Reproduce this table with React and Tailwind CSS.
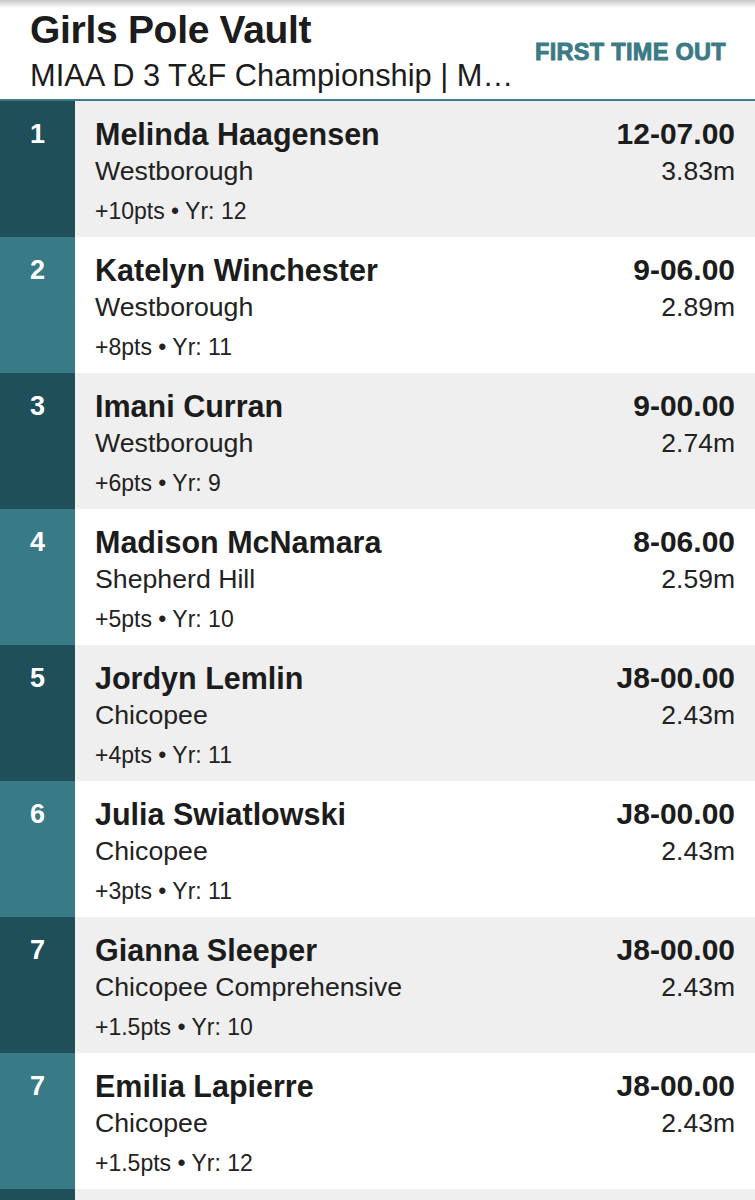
import React from "react";

const rows = [
  { rank: "1", name: "Melinda Haagensen", school: "Westborough", pts: "+10pts", yr: "12", mark: "12-07.00", metric: "3.83m" },
  { rank: "2", name: "Katelyn Winchester", school: "Westborough", pts: "+8pts", yr: "11", mark: "9-06.00", metric: "2.89m" },
  { rank: "3", name: "Imani Curran", school: "Westborough", pts: "+6pts", yr: "9", mark: "9-00.00", metric: "2.74m" },
  { rank: "4", name: "Madison McNamara", school: "Shepherd Hill", pts: "+5pts", yr: "10", mark: "8-06.00", metric: "2.59m" },
  { rank: "5", name: "Jordyn Lemlin", school: "Chicopee", pts: "+4pts", yr: "11", mark: "J8-00.00", metric: "2.43m" },
  { rank: "6", name: "Julia Swiatlowski", school: "Chicopee", pts: "+3pts", yr: "11", mark: "J8-00.00", metric: "2.43m" },
  { rank: "7", name: "Gianna Sleeper", school: "Chicopee Comprehensive", pts: "+1.5pts", yr: "10", mark: "J8-00.00", metric: "2.43m" },
  { rank: "7", name: "Emilia Lapierre", school: "Chicopee", pts: "+1.5pts", yr: "12", mark: "J8-00.00", metric: "2.43m" },
];

export default function App() {
  return (
    <div
      className="w-[755px] h-[1200px] overflow-hidden bg-white text-[#222]"
      style={{ fontFamily: '"Liberation Sans", Arial, sans-serif' }}
    >
      <div className="h-[8px] bg-gradient-to-b from-[#c8c8c8] to-white" />
      <div className="flex items-center justify-between pl-[30px] pr-[29px] pb-[5px]">
        <div className="min-w-0">
          <div className="text-[39px] leading-[44px] font-bold text-[#1c1c1c] tracking-[-0.3px]">Girls Pole Vault</div>
          <div className="mt-[6px] text-[30.8px] leading-[36px] text-[#1c1c1c] whitespace-nowrap">
            MIAA D 3 T&amp;F Championship | M…
          </div>
        </div>
        <div className="text-[23.5px] leading-[28px] font-bold text-[#3c7a85] tracking-[0.3px] [-webkit-text-stroke:0.9px_#3c7a85] mt-[2px]">
          FIRST TIME OUT
        </div>
      </div>
      <div className="h-[2px] bg-[#3b7e88]" />
      <div>
        {rows.map((r, i) => {
          const odd = i % 2 === 0;
          return (
            <div key={i} className={`flex h-[136px] ${odd ? "bg-[#efefef]" : "bg-white"}`}>
              <div
                className={`w-[75px] shrink-0 flex justify-center pt-[15px] ${odd ? "bg-[#1f4f59]" : "bg-[#387b86]"}`}
              >
                <span className="text-[27px] leading-[36px] font-bold text-white">{r.rank}</span>
              </div>
              <div className="flex-1 flex justify-between pl-[20px] pr-[20px] pt-[15px]">
                <div>
                  <div className="text-[30.5px] leading-[36px] font-bold text-[#1c1c1c]">{r.name}</div>
                  <div className="text-[26.7px] leading-[38px] text-[#222]">{r.school}</div>
                  <div className="text-[23px] leading-[42px] text-[#222]">
                    {r.pts} • Yr: {r.yr}
                  </div>
                </div>
                <div className="text-right">
                  <div className="text-[30px] leading-[36px] font-bold text-[#1c1c1c]">{r.mark}</div>
                  <div className="text-[26.5px] leading-[38px] text-[#222]">{r.metric}</div>
                </div>
              </div>
            </div>
          );
        })}
        <div className="flex h-[136px] bg-[#efefef]">
          <div className="w-[75px] shrink-0 bg-[#1f4f59]" />
          <div className="flex-1" />
        </div>
      </div>
    </div>
  );
}
